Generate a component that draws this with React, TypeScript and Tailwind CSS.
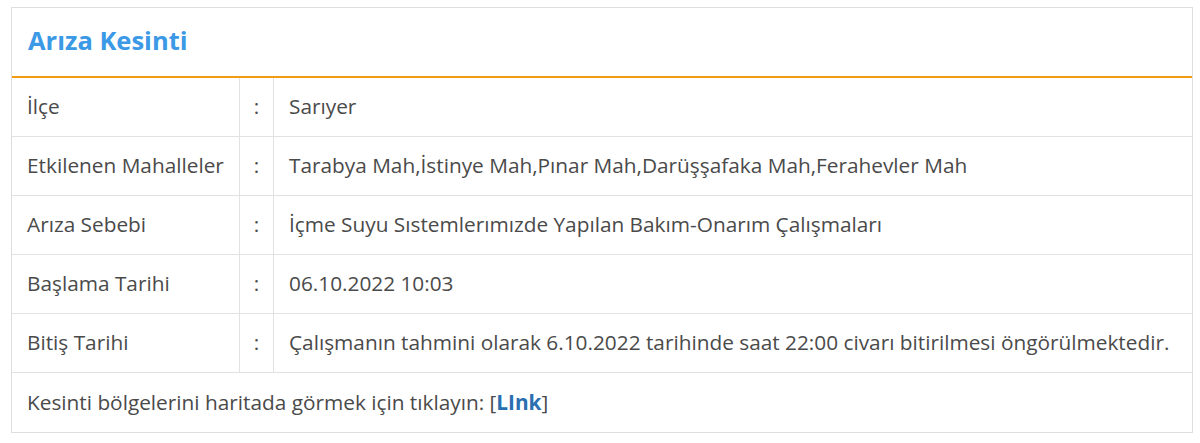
import React from "react";

const rows: [string, string][] = [
  ["İlçe", "Sarıyer"],
  ["Etkilenen Mahalleler", "Tarabya Mah,İstinye Mah,Pınar Mah,Darüşşafaka Mah,Ferahevler Mah"],
  ["Arıza Sebebi", "İçme Suyu Sıstemlerımızde Yapılan Bakım-Onarım Çalışmaları"],
  ["Başlama Tarihi", "06.10.2022 10:03"],
  ["Bitiş Tarihi", "Çalışmanın tahmini olarak 6.10.2022 tarihinde saat 22:00 civarı bitirilmesi öngörülmektedir."],
];

export default function App() {
  return (
    <div className="bg-white w-[1200px] h-[443px] pt-[7px] pl-[11px]" style={{ fontFamily: '"Open Sans", "Noto Sans", sans-serif' }}>
      <div className="w-[1182px] border border-[#dedede] bg-white">
        <div className="h-[70px] flex items-center pl-[16px] border-b-2 border-[#f39c12]">
          <h2 className="text-[25.5px] font-bold text-[#3b99e6] leading-none pb-[2px]">Arıza Kesinti</h2>
        </div>
        <div className="flex flex-col text-[20.8px] text-[#4a4a4a]">
          {rows.map(([label, value]) => (
            <div key={label} className="flex h-[59px] border-b border-[#e2e2e2]">
              <div className="w-[228px] border-r border-[#e2e2e2] flex items-center pl-[15px] whitespace-nowrap">{label}</div>
              <div className="w-[34px] border-r border-[#e2e2e2] flex items-center justify-center">:</div>
              <div className="flex-1 flex items-center pl-[15px] whitespace-nowrap">{value}</div>
            </div>
          ))}
          <div className="h-[59px] flex items-center pl-[15px]">
            <span>
              Kesinti bölgelerini haritada görmek için tıklayın: [<a className="font-bold text-[#2a6fb0]">LInk</a>]
            </span>
          </div>
        </div>
      </div>
    </div>
  );
}
